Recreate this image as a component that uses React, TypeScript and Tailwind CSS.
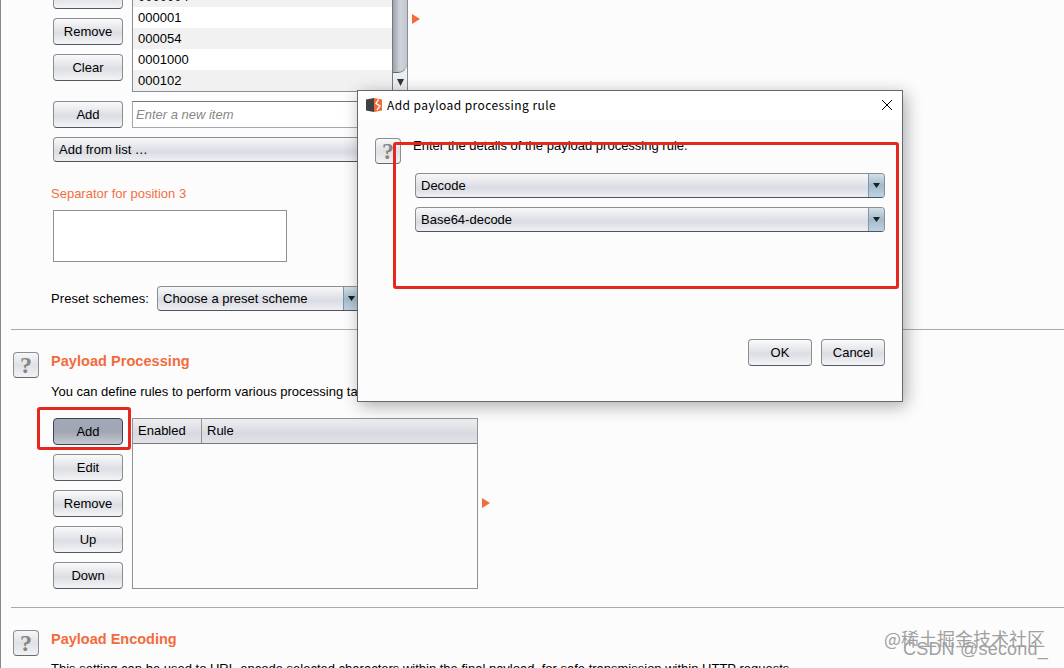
import type { ReactNode } from "react";
import clsx from "clsx";

const payloads = ["0000004", "000001", "000054", "0001000", "000102"];

function Button({
  children,
  pressed,
  className = "w-[70px]",
}: {
  children?: ReactNode;
  pressed?: boolean;
  className?: string;
}) {
  return (
    <button
      className={clsx(
        "block h-[27px] shrink-0 rounded-[4px] border text-center leading-[25px]",
        pressed
          ? "border-[#3c4454] bg-linear-to-b from-[#a2a8b5] via-[#a0a6b3] to-[#c5c9d2]"
          : "border-[#8b8d92] border-b-[#55585e] bg-linear-to-b from-[#fafafb] via-[#dcdee4] via-55% to-[#f3f4f6]",
        className,
      )}
    >
      {children}
    </button>
  );
}

function Combo({ label, className, arrow = true }: { label: string; className: string; arrow?: boolean }) {
  return (
    <div
      className={clsx(
        "flex h-[25px] shrink-0 overflow-hidden rounded-[4px] border border-[#8b8d92] border-b-[#4f545c] bg-linear-to-b from-[#f8f8f9] via-[#dadce4] via-60% to-[#eff0f2]",
        className,
      )}
    >
      <span className="flex-1 pl-[5px] leading-[23px]">{label}</span>
      {arrow && (
        <span className="flex w-[16px] items-center justify-center border-l border-[#7f95a8] bg-linear-to-b from-[#d3e0ea] via-[#a4bac9] to-[#bdd3e4]">
          <svg width="7" height="5" viewBox="0 0 7 5">
            <path d="M0 0h7L3.5 5z" fill="#17202a" />
          </svg>
        </span>
      )}
    </div>
  );
}

function Help() {
  return (
    <div className="flex h-[26px] w-[26px] shrink-0 items-center justify-center rounded-[4px] border border-[#8c8e92] border-b-[#66696e] bg-linear-to-b from-[#f7f7f8] via-[#dfe1e5] to-[#f1f2f4] font-['Liberation_Serif',serif] text-[24px] leading-[24px] font-bold text-[#858585]">
      <span className="-mt-px">?</span>
    </div>
  );
}

function Marker() {
  return (
    <svg width="8" height="10" viewBox="0 0 8 10" className="shrink-0">
      <path d="M0 0l8 5-8 5z" fill="#f26b3a" />
    </svg>
  );
}

function PayloadList() {
  return (
    <div className="flex h-[110px] w-[276px] border border-[#8b8d92] bg-white">
      <ul className="mt-[3px] flex-1">
        {payloads.map((p) => (
          <li key={p} className="h-[21px] pl-[5px] leading-[21px] odd:bg-[#f1f1f1]">
            {p}
          </li>
        ))}
      </ul>
      <div className="flex w-[15px] flex-col border-l border-[#77797f] bg-[#eceef1]">
        <div className="h-[90px] rounded-br-[9px] border-b border-[#63666d] bg-linear-to-r from-[#9da1aa] via-[#cfd3da] to-[#c2c6cf]" />
        <div className="flex flex-1 items-center justify-center">
          <svg width="7" height="7" viewBox="0 0 7 7">
            <path d="M0 0h7L3.5 7z" fill="#333" />
          </svg>
        </div>
      </div>
    </div>
  );
}

function Dialog() {
  return (
    <div className="absolute top-[90px] left-[356px] h-[312px] w-[546px] border border-[#66686b] bg-[#fcfcfc] shadow-[3px_4px_16px_rgba(0,0,0,0.32)]">
      <div className="flex h-[29px] items-center bg-white pr-[9px] pl-2">
        <svg width="16" height="14" viewBox="0 0 16 14" className="-mt-px">
          <path d="M0 1.5L8 0v14L0 12.5z" fill="#414141" />
          <path d="M8 0l8 1.5v11L8 14z" fill="#f26a3b" />
          <path d="M12.5 1.5L10 5.5l4 2.5-3 4" fill="none" stroke="#fff" strokeWidth="1.3" />
        </svg>
        <span className="-mt-[2px] ml-[5px] flex-1 font-['Noto_Sans_CJK_SC','Noto_Sans',sans-serif] text-[12px] leading-[27px] tracking-[0.43px]">
          Add payload processing rule
        </span>
        <svg width="12" height="12" viewBox="0 0 12 12" stroke="#000" strokeWidth="1" className="-mt-px">
          <path d="M1 1l10 10M11 1L1 11" />
        </svg>
      </div>
      <div className="flex pt-[18px] pl-[17px]">
        <Help />
        <div className="-mt-px ml-[12px]">
          <p className="h-[36px] leading-[17px]">Enter the details of the payload processing rule.</p>
          <div className="ml-[2px] flex flex-col gap-[9px]">
            <Combo label="Decode" className="w-[470px]" />
            <Combo label="Base64-decode" className="w-[470px]" />
          </div>
        </div>
      </div>
      <div className="mt-[107px] flex justify-end gap-[9px] pr-[17px]">
        <Button className="w-16">OK</Button>
        <Button className="w-16">Cancel</Button>
      </div>
      <div className="absolute top-[51px] left-[35px] h-[147px] w-[506px] rounded-[3px] border-3 border-[#e5281d]" />
    </div>
  );
}

export default function App() {
  return (
    <div className="relative h-[668px] w-[1064px] overflow-hidden border-l border-[#88898b] bg-[#fcfcfc] font-['Liberation_Sans',Arial,sans-serif] text-[13px] text-black">
      <section className="flow-root h-[329px] pl-[52px]">
        <div className="-mt-[18px] flex">
          <div className="flex w-[79px] flex-col gap-[9px]">
            <Button />
            <Button>Remove</Button>
            <Button>Clear</Button>
          </div>
          <PayloadList />
          <div className="mt-[32px] ml-[4px]">
            <Marker />
          </div>
        </div>
        <div className="mt-[9px] flex gap-[9px]">
          <Button>Add</Button>
          <div className="h-[27px] w-[276px] border border-[#a6a7aa] border-t-[#77797d] bg-white pl-[3px] leading-[25px] text-[#888] italic">
            Enter a new item
          </div>
        </div>
        <Combo label="Add from list …" className="mt-[9px] w-[355px]" arrow={false} />
        <h3 className="mt-[23px] -ml-[2px] h-[25px] leading-[18px] text-[#f2703f]">Separator for position 3</h3>
        <div className="h-[52px] w-[234px] border border-[#8e9094] bg-white" />
        <div className="mt-[24px] -ml-[2px] flex">
          <span className="w-[106px] leading-[25px] tracking-[0.08px]">Preset schemes:</span>
          <Combo label="Choose a preset scheme" className="w-[203px]" />
        </div>
      </section>

      <section className="ml-[10px] h-[278px] border-t border-[#a9aaac] pt-[22px] pl-[2px]">
        <div className="flex">
          <Help />
          <div className="ml-[12px]">
            <h2 className="h-[31px] text-[14.5px] leading-[18px] font-bold tracking-[0.05px] text-[#f26b3a]">
              Payload Processing
            </h2>
            <p className="leading-[17px]">
              You can define rules to perform various processing tasks on each payload before it is used.
            </p>
          </div>
        </div>
        <div className="mt-[18px] ml-[40px] flex items-center">
          <div className="relative flex w-[79px] flex-col gap-[9px]">
            <Button pressed>Add</Button>
            <Button>Edit</Button>
            <Button>Remove</Button>
            <Button>Up</Button>
            <Button>Down</Button>
            <div className="absolute -top-[11px] -left-[16px] h-[43px] w-[94px] rounded-[3px] border-3 border-[#e5281d]" />
          </div>
          <div className="h-[171px] w-[346px] border border-[#919297]">
            <div className="flex h-[25px] border-b border-[#77797f] bg-linear-to-b from-[#eeeff1] via-[#d8dae1] via-60% to-[#e0e2e7] leading-[23px]">
              <span className="w-[69px] border-r border-[#919297] pl-[5px]">Enabled</span>
              <span className="pl-[5px]">Rule</span>
            </div>
          </div>
          <div className="mb-px ml-[4px]">
            <Marker />
          </div>
        </div>
      </section>

      <section className="ml-[10px] flex border-t border-[#a9aaac] pt-[22px] pl-[2px]">
        <Help />
        <div className="ml-[12px] whitespace-nowrap">
          <h2 className="h-[30px] text-[14.5px] leading-[18px] font-bold text-[#f26b3a]">Payload Encoding</h2>
          <p className="leading-[17px]">
            This setting can be used to URL-encode selected characters within the final payload, for safe transmission
            within HTTP requests.
          </p>
        </div>
      </section>

      <Dialog />

      <div className="absolute top-[626px] left-[883px] font-['Noto_Sans_CJK_SC',sans-serif] text-[18px] leading-[24px] whitespace-nowrap text-[#a0a0a0]">
        @稀土掘金技术社区
      </div>
      <div className="absolute top-[638px] left-[902px] text-[18px] leading-[22px] tracking-[0.2px] whitespace-nowrap text-[#a0a0a0]">
        CSDN @second_
      </div>
    </div>
  );
}
